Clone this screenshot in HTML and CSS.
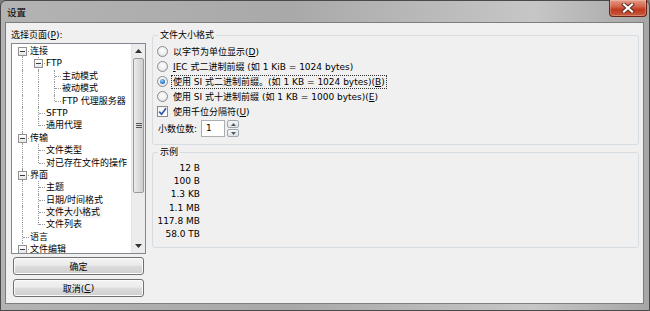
FILE: index.html
```html
<!DOCTYPE html>
<html>
<head>
<meta charset="utf-8">
<link rel="stylesheet" href="styles.css">
</head>
<body>
<div class="window">
  <div class="titlebar">
    <span class="title">设置</span>
    <div class="close">
      <svg width="14" height="10" viewBox="0 0 14 10">
        <path d="M3 1.5 L11 8.5 M11 1.5 L3 8.5" stroke="#5a2a22" stroke-width="4" stroke-linecap="square"/>
        <path d="M3 1.5 L11 8.5 M11 1.5 L3 8.5" stroke="#ffffff" stroke-width="2.2" stroke-linecap="square"/>
      </svg>
    </div>
  </div>
  <div class="client">
    <div class="left">
      <div class="lbl">选择页面(<u>P</u>):</div>
      <div class="tree">
        <div class="items">
          <div class="row"><span class="c tf"><i class="exp"></i></span><span class="tx">连接</span></div>
          <div class="row"><span class="c v"></span><span class="c t"><i class="exp"></i></span><span class="tx">FTP</span></div>
          <div class="row"><span class="c v"></span><span class="c v"></span><span class="c t"></span><span class="tx">主动模式</span></div>
          <div class="row"><span class="c v"></span><span class="c v"></span><span class="c t"></span><span class="tx">被动模式</span></div>
          <div class="row"><span class="c v"></span><span class="c v"></span><span class="c l"></span><span class="tx">FTP 代理服务器</span></div>
          <div class="row"><span class="c v"></span><span class="c t"></span><span class="tx">SFTP</span></div>
          <div class="row"><span class="c v"></span><span class="c l"></span><span class="tx">通用代理</span></div>
          <div class="row"><span class="c t"><i class="exp"></i></span><span class="tx">传输</span></div>
          <div class="row"><span class="c v"></span><span class="c t"></span><span class="tx">文件类型</span></div>
          <div class="row"><span class="c v"></span><span class="c l"></span><span class="tx">对已存在文件的操作</span></div>
          <div class="row"><span class="c t"><i class="exp"></i></span><span class="tx">界面</span></div>
          <div class="row"><span class="c v"></span><span class="c t"></span><span class="tx">主题</span></div>
          <div class="row"><span class="c v"></span><span class="c t"></span><span class="tx">日期/时间格式</span></div>
          <div class="row"><span class="c v"></span><span class="c t"></span><span class="tx sel">文件大小格式</span></div>
          <div class="row"><span class="c v"></span><span class="c l"></span><span class="tx">文件列表</span></div>
          <div class="row"><span class="c t"></span><span class="tx">语言</span></div>
          <div class="row"><span class="c t"><i class="exp"></i></span><span class="tx">文件编辑</span></div>
        </div>
        <div class="sb">
          <div class="sb-btn"><svg width="7" height="4" viewBox="0 0 7 4"><path d="M0 4 L3.5 0 L7 4Z" fill="#333"/></svg></div>
          <div class="sb-track">
            <div class="thumb">
              <div class="grip"><i></i><i></i><i></i></div>
            </div>
          </div>
          <div class="sb-btn"><svg width="7" height="4" viewBox="0 0 7 4"><path d="M0 0 L3.5 4 L7 0Z" fill="#333"/></svg></div>
        </div>
      </div>
      <div class="btn">确定</div>
      <div class="btn">取消(<u>C</u>)</div>
    </div>
    <div class="right">
      <fieldset class="grp g1">
        <legend>文件大小格式</legend>
        <div class="opt"><span class="radio"></span><span class="otx">以字节为单位显示(<u>D</u>)</span></div>
        <div class="opt"><span class="radio"></span><span class="otx"><u>I</u>EC 式二进制前缀 (如 1 KiB = 1024 bytes)</span></div>
        <div class="opt"><span class="radio on"></span><span class="otx focus">使用 SI 式二进制前缀。(如 1 KB = 1024 bytes)(<u>B</u>)</span></div>
        <div class="opt"><span class="radio"></span><span class="otx">使用 SI 式十进制前缀 (如 1 KB = 1000 bytes)(<u>E</u>)</span></div>
        <div class="opt"><span class="check"><svg width="9" height="9" viewBox="0 0 9 9"><path d="M1.2 4.6 L3.6 7.2 L8 1.2" fill="none" stroke="#2a54a8" stroke-width="1.6"/></svg></span><span class="otx">使用千位分隔符(<u>U</u>)</span></div>
        <div class="opt spinrow">
          <span class="dl">小数位数:</span>
          <span class="spin">1</span>
          <span class="spinbtns">
            <span class="sbtn"><svg width="5" height="3" viewBox="0 0 5 3"><path d="M0 3 L2.5 0 L5 3Z" fill="#4a5a6a"/></svg></span>
            <span class="sbtn"><svg width="5" height="3" viewBox="0 0 5 3"><path d="M0 0 L2.5 3 L5 0Z" fill="#4a5a6a"/></svg></span>
          </span>
        </div>
      </fieldset>
      <fieldset class="grp g2">
        <legend>示例</legend>
        <div class="ex">12 B</div>
        <div class="ex">100 B</div>
        <div class="ex">1.3 KB</div>
        <div class="ex">1.1 MB</div>
        <div class="ex">117.8 MB</div>
        <div class="ex">58.0 TB</div>
      </fieldset>
    </div>
  </div>
</div>
</body>
</html>
```

FILE: styles.css
```css
* { box-sizing: border-box; }
html, body { margin: 0; padding: 0; }
body {
  width: 650px;
  height: 311px;
  overflow: hidden;
  background: #7d7d7d;
  font-family: "DejaVu Sans", "Noto Sans CJK SC", sans-serif;
  font-size: 9px;
  color: #000;
}
u { text-decoration: underline; }

.window {
  width: 650px;
  height: 311px;
  border: 1px solid #4a4a4a;
  border-radius: 6px 6px 0 0;
  background: linear-gradient(to right, #b3b3b3 0%, #a9a9a9 45%, #c6c6c6 82%, #a6a6a6 100%);
  display: flex;
  flex-direction: column;
  padding: 0 5px 6px 4px;
}

.titlebar {
  height: 21px;
  display: flex;
  align-items: flex-start;
  justify-content: space-between;
}
.title {
  margin-top: 6px;
  margin-left: 2px;
  font-size: 9.5px;
  line-height: 12px;
}
.close {
  width: 38px;
  height: 17px;
  margin-top: -1px;
  margin-right: -3px;
  border: 1px solid #6a2317;
  border-top: none;
  border-radius: 0 0 4px 4px;
  background: linear-gradient(#e59a85 0%, #d4664e 40%, #c0391f 60%, #c95a3f 100%);
  display: flex;
  align-items: center;
  justify-content: center;
  box-shadow: inset 0 0 0 1px rgba(255,255,255,0.25);
}

.client {
  flex: 1;
  border: 1px solid #7e7e7e;
  background: #f0f0f0;
  display: flex;
  padding: 0 4px 5px 5px;
}

.left {
  width: 135px;
  display: flex;
  flex-direction: column;
}
.lbl {
  height: 20px;
  line-height: 12px;
  padding-top: 6px;
}
.tree {
  height: 211px;
  border: 1px solid #828790;
  background: #fff;
  display: flex;
  overflow: hidden;
}
.items {
  flex: 1;
  padding-left: 2px;
  padding-top: 1px;
  overflow: hidden;
}
.row {
  height: 12.4px;
  display: flex;
  align-items: stretch;
  white-space: nowrap;
}
.c {
  width: 16px;
  flex: none;
  position: relative;
}
.c.v::before, .c.t::before, .c.l::before, .c.tf::before {
  content: "";
  position: absolute;
  left: 8px;
  top: 0;
  bottom: 0;
  border-left: 1px dotted #9a9a9a;
}
.c.l::before { bottom: 50%; }
.c.tf::before { top: 50%; }
.c.t::after, .c.l::after, .c.tf::after {
  content: "";
  position: absolute;
  left: 9px;
  right: 1px;
  top: 6px;
  border-top: 1px dotted #9a9a9a;
}
.exp {
  position: absolute;
  left: 4px;
  top: 2px;
  width: 9px;
  height: 9px;
  border: 1px solid #919191;
  background: linear-gradient(#ffffff, #e6e6e6);
  z-index: 1;
}
.exp::after {
  content: "";
  position: absolute;
  left: 1px;
  right: 1px;
  top: 3px;
  border-top: 1px solid #3a3a3a;
}
.tx {
  line-height: 12.4px;
  padding-left: 0;
  padding-right: 2px;
}
.tx.sel { background: #f4f4f4; }

.sb {
  width: 14px;
  flex: none;
  display: flex;
  flex-direction: column;
  background: #ececec;
  border-left: 1px solid #e4e4e4;
}
.sb-btn {
  height: 14px;
  display: flex;
  align-items: center;
  justify-content: center;
}
.sb-track {
  flex: 1;
  padding: 0 1px;
}
.thumb {
  height: 135px;
  border: 1px solid #9a9a9a;
  border-radius: 2px;
  background: linear-gradient(to right, #ececec, #dcdcdc 50%, #cfcfcf);
  display: flex;
  align-items: center;
  justify-content: center;
}
.grip {
  display: flex;
  flex-direction: column;
  gap: 1px;
}
.grip i {
  display: block;
  width: 6px;
  height: 1px;
  background: #555;
}

.btn {
  height: 18px;
  margin-top: 3px;
  margin-left: 2px;
  width: 131px;
  border: 1px solid #707070;
  border-radius: 3px;
  background: linear-gradient(#f3f3f3 0%, #ebebeb 45%, #dddddd 50%, #cfcfcf 100%);
  box-shadow: inset 0 0 0 1px #fbfbfb;
  display: flex;
  align-items: center;
  justify-content: center;
}
.btn + .btn { margin-top: 4px; }

.right {
  flex: 1;
  margin-left: 6px;
  padding-top: 6px;
  display: flex;
  flex-direction: column;
}
.grp {
  margin: 0;
  border: 1px solid #d5dde3;
  border-radius: 3px;
  padding: 0 0 0 4px;
  min-width: 0;
}
.grp legend {
  padding: 0 2px;
  margin-left: 1px;
  line-height: 12px;
}
.g1 { padding-top: 3px; padding-bottom: 6px; }
.opt {
  height: 15px;
  display: flex;
  align-items: center;
  white-space: nowrap;
}
.radio {
  width: 11px;
  height: 11px;
  border-radius: 50%;
  border: 1px solid #8a8c8e;
  background: radial-gradient(circle at 50% 40%, #ffffff 0%, #f0f0f0 50%, #d2d2d2 100%);
  display: flex;
  align-items: center;
  justify-content: center;
  flex: none;
}
.radio.on::after {
  content: "";
  width: 5px;
  height: 5px;
  border-radius: 50%;
  background: radial-gradient(circle at 40% 35%, #9fd0f5 0%, #3c86cf 50%, #14498d 100%);
}
.check {
  width: 11px;
  height: 11px;
  border: 1px solid #8a8c8e;
  background: linear-gradient(#f4f4f4, #ffffff);
  display: flex;
  align-items: center;
  justify-content: center;
  flex: none;
}
.otx {
  margin-left: 3px;
  padding: 0 1px;
  line-height: 12px;
  border: 1px dotted transparent;
}
.otx.focus { border-color: #333; }
.spinrow { height: 19px; }
.dl { margin-left: 1px; }
.spin {
  width: 24px;
  height: 17px;
  margin-left: 4px;
  border: 1px solid #abadb3;
  background: #fff;
  padding-left: 4px;
  line-height: 15px;
}
.spinbtns {
  display: flex;
  flex-direction: column;
  margin-left: 2px;
  height: 17px;
  width: 12px;
  gap: 1px;
}
.sbtn {
  flex: 1;
  border: 1px solid #a0a6ad;
  border-radius: 2px;
  background: linear-gradient(#f6f6f6, #dfe3e7);
  display: flex;
  align-items: center;
  justify-content: center;
}

.g2 { margin-top: 1px; padding-top: 4px; padding-bottom: 6px; }
.ex {
  width: 43px;
  text-align: right;
  height: 13.2px;
  line-height: 13.2px;
}
```
